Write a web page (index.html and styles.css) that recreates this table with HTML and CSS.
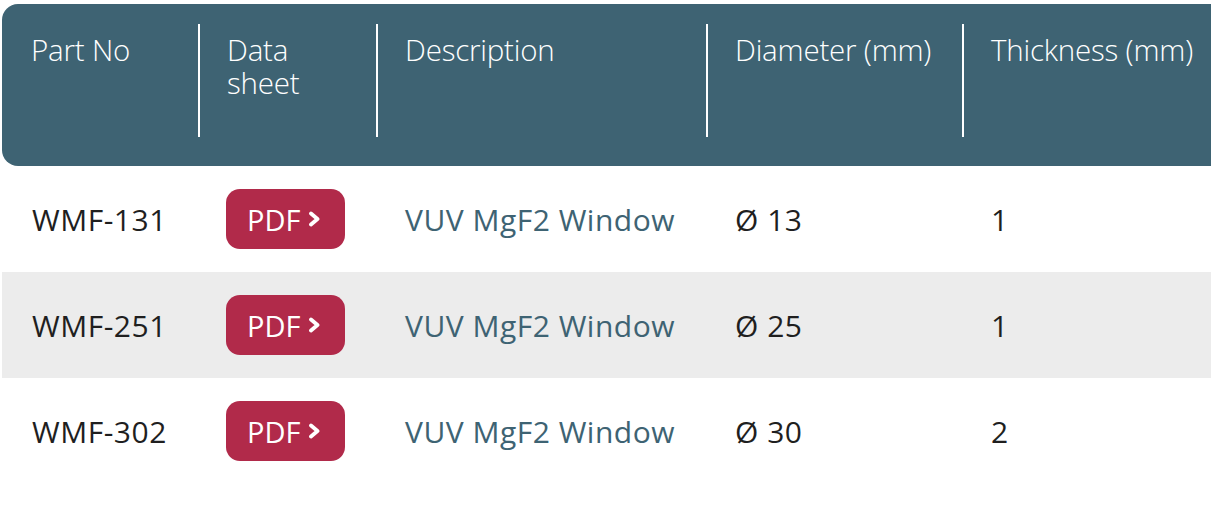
FILE: index.html
```html
<!DOCTYPE html>
<html lang="en">
<head>
<meta charset="utf-8">
<title>Windows</title>
<link rel="stylesheet" href="styles.css">
</head>
<body>
<div class="table">
  <div class="head">
    <div class="th">Part No</div>
    <div class="th sep">Data<br>sheet</div>
    <div class="th sep">Description</div>
    <div class="th sep">Diameter (mm)</div>
    <div class="th sep">Thickness (mm)</div>
  </div>
  <div class="row">
    <div class="td first">WMF-131</div>
    <div class="td"><a class="pdf" href="#">PDF<svg class="chev" viewBox="0 0 13 16" width="13" height="16"><polyline points="3,2.5 9.5,8 3,13.5"/></svg></a></div>
    <div class="td desc">VUV MgF2 Window</div>
    <div class="td">Ø 13</div>
    <div class="td">1</div>
  </div>
  <div class="row alt">
    <div class="td first">WMF-251</div>
    <div class="td"><a class="pdf" href="#">PDF<svg class="chev" viewBox="0 0 13 16" width="13" height="16"><polyline points="3,2.5 9.5,8 3,13.5"/></svg></a></div>
    <div class="td desc">VUV MgF2 Window</div>
    <div class="td">Ø 25</div>
    <div class="td">1</div>
  </div>
  <div class="row">
    <div class="td first">WMF-302</div>
    <div class="td"><a class="pdf" href="#">PDF<svg class="chev" viewBox="0 0 13 16" width="13" height="16"><polyline points="3,2.5 9.5,8 3,13.5"/></svg></a></div>
    <div class="td desc">VUV MgF2 Window</div>
    <div class="td">Ø 30</div>
    <div class="td">2</div>
  </div>
</div>
</body>
</html>
```
FILE: styles.css
```css
html, body {
  margin: 0;
  padding: 0;
  background: #ffffff;
  overflow: hidden;
}
body {
  font-family: "Open Sans", "Noto Sans", sans-serif;
}
.table {
  margin: 4px 0 0 2px;
  width: 1260px;
}
.head, .row {
  display: grid;
  grid-template-columns: 196px 178px 330px 256px 300px;
}
.head {
  background: #3e6373;
  border-radius: 16px 0 0 16px;
  padding: 20px 0 29px;
  color: #ffffff;
}
.th {
  font-weight: 300;
  font-size: 29.5px;
  line-height: 33px;
  padding: 9px 0 0 27px;
  height: 104px;
  letter-spacing: -0.2px;
}
.th:first-child {
  padding-left: 29px;
}
.th.sep {
  border-left: 2px solid #ffffff;
}
.row {
  height: 106px;
  align-items: center;
  color: #1f1f1f;
  font-size: 30px;
  letter-spacing: 0.5px;
}
.row:first-of-type {
  height: 107px;
}
.alt {
  background: #ececec;
}
.td {
  padding-left: 29px;
  white-space: nowrap;
}
.td.first {
  padding-left: 30px;
}
.desc {
  color: #3e6373;
}
.pdf {
  display: inline-flex;
  align-items: center;
  gap: 8px;
  box-sizing: border-box;
  width: 119px;
  height: 60px;
  padding-left: 21px;
  margin-left: -1px;
  background: #b12a4a;
  color: #ffffff;
  text-decoration: none;
  border-radius: 14px;
  font-size: 29px;
  letter-spacing: 0;
}
.chev {
  fill: none;
  stroke: #ffffff;
  stroke-width: 3.8;
  stroke-linecap: round;
  stroke-linejoin: round;
}
```
